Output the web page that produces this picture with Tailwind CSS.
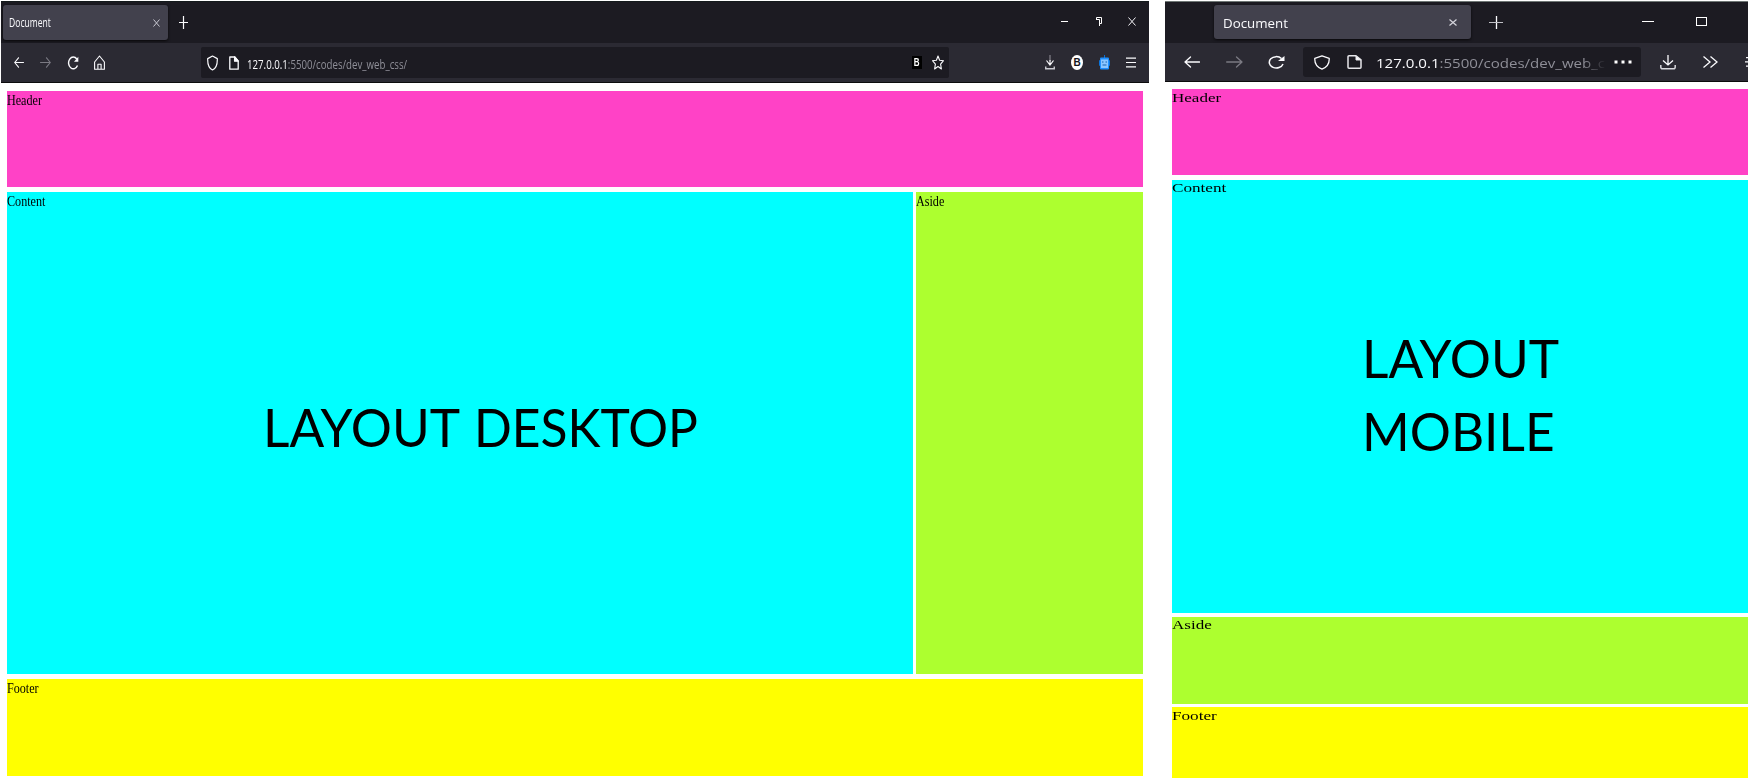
<!DOCTYPE html>
<html lang="en">
<head>
<meta charset="utf-8">
<title>Layout desktop / mobile</title>
<script src="https://cdn.jsdelivr.net/npm/@tailwindcss/browser@4"></script>
</head>
<body class="bg-white w-[1748px] h-[778px] overflow-hidden flex pt-px pl-px gap-4 text-black font-['Liberation_Serif',serif]">

<!-- Desktop window -->
<section class="w-[1148px] shrink-0 flex flex-col">
  <div class="h-[42px] bg-[#1c1b22] flex items-start text-[#fbfbfe] border-t border-[#141a1c]">
    <div class="ml-[2px] mt-[3px] w-[165px] h-[35px] rounded-[3px] bg-[#42414d] flex items-center shadow-sm shadow-black/60">
      <div class="ml-[6px] mt-px w-[144px] text-[12px] leading-[18px] whitespace-nowrap font-['Open_Sans',sans-serif]"><span class="inline-block origin-left scale-x-[.715]">Document</span></div>
      <svg class="w-[7px] h-[8px] shrink-0" viewBox="0 0 7 8" fill="none" stroke="#c8c8d0" stroke-width="1"><path d="M.5 .5l6 7M6.5 .5l-6 7"/></svg>
    </div>
    <svg class="ml-[11px] mt-[14px] w-[9px] h-[13px]" viewBox="0 0 9 13" fill="none" stroke="#fbfbfe" stroke-width="1.2"><path d="M4.5 0v13M0 6.500h9"/></svg>
    <svg class="ml-auto mt-[19px] w-[7px] h-px" viewBox="0 0 7 1"><path fill="#fff" d="M0 0h7v1H0z"/></svg>
    <svg class="ml-[28px] mt-[15px] w-[6px] h-[9px]" viewBox="0 0 6 9" fill="none" stroke="#fff" stroke-width="1"><path d="M.5 3V.500h5v6H3.500M0 2.500h3.500V9"/></svg>
    <svg class="ml-[26px] mr-[13px] mt-[15px] w-[8px] h-[9px]" viewBox="0 0 8 9" fill="none" stroke="#f0f0f4" stroke-width="1"><path d="M.5 .5l7 8M7.500 .5l-7 8"/></svg>
  </div>
  <div class="h-[40px] bg-[#2b2a33] border-b border-[#0c0c0d] flex items-center text-[#fbfbfe]">
    <svg class="ml-[13px] w-[10px] h-[11px]" viewBox="0 0 10 11" fill="none" stroke="#fbfbfe" stroke-width="1.100" stroke-linecap="round" stroke-linejoin="round"><path d="M9.500 5.500H.7M4.500 .8L.7 5.500l3.800 4.700"/></svg>
    <svg class="ml-[16px] w-[11px] h-[11px]" viewBox="0 0 11 11" fill="none" stroke="#7b7a83" stroke-width="1.100" stroke-linecap="round" stroke-linejoin="round"><path d="M.5 5.500h9.800M6.500 .8l3.800 4.700-3.800 4.700"/></svg>
    <svg class="ml-[16px] w-[12px] h-[14px]" viewBox="0 0 12 14" fill="none" stroke="#fbfbfe" stroke-width="1.400"><path d="M9.800 3A4.700 5.900 0 1 0 10.500 9.500"/><path fill="#fbfbfe" stroke="none" d="M11.300 .8v5H7z"/></svg>
    <svg class="ml-[15px] w-[11px] h-[15px]" viewBox="0 0 11 15" fill="none" stroke="#fbfbfe" stroke-width="1.100" stroke-linejoin="round"><path d="M.6 7L5.500 1l4.900 6v7.200H.6zM3.900 14V9.200h3.200V14"/></svg>
    <div class="ml-[96px] w-[748px] h-[31px] rounded-[2px] bg-[#1c1b22] flex items-center">
      <svg class="ml-[6px] w-[11px] h-[16px]" viewBox="0 0 11 16" fill="none" stroke="#fbfbfe" stroke-width="1.200" stroke-linejoin="round"><path d="M5.500 1L10.300 3.600C10.500 9 9.500 13 5.500 15 1.500 13 .5 9 .7 3.600z"/></svg>
      <svg class="ml-[11px] w-[10px] h-[14px]" viewBox="0 0 10 14" fill="none" stroke="#fbfbfe" stroke-width="1.300" stroke-linejoin="round"><path d="M.8 1h5l3.400 4v8.200H.8z"/><path fill="#fbfbfe" d="M5.600 1v4.200h3.600z"/></svg>
      <div class="ml-[8px] mt-[3px] w-[160px] whitespace-nowrap text-[13px] leading-[18px] font-['Open_Sans',sans-serif]"><span class="inline-block origin-left scale-x-[.745]">127.0.0.1<span class="text-[#8f8f98]">:5500/codes/dev_web_css/</span></span></div>
      <div class="ml-auto w-[10px] h-[13px] bg-black text-white text-[10px] leading-[13px] text-center font-bold font-['Liberation_Sans',sans-serif]"><span class="inline-block scale-x-[.8]">B</span></div>
      <svg class="ml-[10px] mr-[5px] w-[12px] h-[15px]" viewBox="0 0 12 15" fill="none" stroke="#fbfbfe" stroke-width="1.100" stroke-linejoin="round"><path d="M6 1l1.600 4.200 3.900.5-2.900 3.500.8 4.800L6 11.500 2.600 14l.8-4.800L.5 5.700l3.900-.5z"/></svg>
    </div>
    <svg class="ml-[96px] w-[10px] h-[15px]" viewBox="0 0 10 15" fill="none" stroke="#fbfbfe" stroke-width="1.200"><path stroke="#85848d" d="M5 0v6"/><path d="M5 5v5M1.500 5.500L5 10l3.500-4.500"/><path stroke="#c8c8cf" stroke-width="1.500" d="M.7 11.500v2.300h8.600v-2.300"/></svg>
    <div class="ml-[16px] w-[12px] h-[15px] rounded-[50%] bg-white text-[#15141a] text-[10px] leading-[15px] text-center font-bold font-['Liberation_Sans',sans-serif]">B</div>
    <svg class="ml-[16px] w-[11px] h-[15px]" viewBox="0 0 11 15"><path stroke="#0a6fd0" stroke-width="1" d="M5.500 0v3"/><rect x="0" y="5" width="11" height="6" rx="1" fill="#0a74dc"/><rect x="1" y="2.500" width="9" height="12" rx="1" fill="#1e90ff"/><rect x="2" y="4.500" width="7" height="8.500" fill="#8cc6ff"/><path stroke="#1560b0" d="M3 7h1.500M6.500 7H8M3.500 10h4"/></svg>
    <svg class="ml-[16px] w-[10px] h-[11px]" viewBox="0 0 10 11"><path fill="#fbfbfe" d="M0 .5h10v1.200H0zM0 4.900h10v1.200H0zM0 9.300h10v1.200H0z"/></svg>
  </div>
  <main class="mt-[8px] ml-[6px] w-[1136px] flex flex-col gap-[5px] text-[14px] leading-[20px]">
    <header class="h-[96px] bg-[#ff42c6]"><span class="inline-block origin-left scale-x-[.865]">Header</span></header>
    <div class="flex gap-[3px] h-[482px]">
      <article class="w-[906px] bg-[#00ffff] flex flex-col">
        <div><span class="inline-block origin-left scale-x-[.865]">Content</span></div>
        <h1 class="ml-[256px] mt-[178px] w-[500px] whitespace-nowrap text-[53px] leading-[73px] font-['Lato',sans-serif]"><span class="inline-block origin-left scale-x-[.97]">LAYOUT</span> <span class="inline-block -ml-[6px] origin-left scale-x-[.938]">DESKTOP</span></h1>
      </article>
      <aside class="w-[227px] bg-[#adff2f]"><span class="inline-block origin-left scale-x-[.865]">Aside</span></aside>
    </div>
    <footer class="h-[97px] bg-[#ffff00]"><span class="inline-block origin-left scale-x-[.865]">Footer</span></footer>
  </main>
</section>

<!-- Mobile window, running past the right edge -->
<section class="w-[583px] shrink-0 flex flex-col overflow-hidden">
  <div class="h-[42px] bg-[#1c1b22] flex items-start text-[#fbfbfe] border-t border-[#6f7775]">
    <div class="ml-[49px] mt-[3px] w-[257px] h-[34px] rounded-[3px] bg-[#42414d] flex items-center shadow-sm shadow-black/60">
      <div class="ml-[9px] mt-[3px] w-[226px] text-[12px] leading-[18px] whitespace-nowrap font-['Open_Sans',sans-serif]"><span class="inline-block origin-left scale-x-[1.11]">Document</span></div>
      <svg class="w-[8px] h-[7px] shrink-0" viewBox="0 0 8 7" fill="none" stroke="#d5d5dc" stroke-width="1.200"><path d="M.5 .5l7 6M7.500 .5l-7 6"/></svg>
    </div>
    <svg class="ml-[18px] mt-[14px] w-[14px] h-[13px]" viewBox="0 0 14 13" fill="none" stroke="#fbfbfe"><path stroke-width="1.300" d="M7.500 0v13"/><path stroke="#c0c0c6" stroke-width="1" d="M0 6.500h14"/></svg>
    <svg class="ml-[139px] mt-[19px] w-[12px] h-px" viewBox="0 0 12 1"><path fill="#fff" d="M0 0h12v1H0z"/></svg>
    <div class="ml-[42px] mt-[15px] w-[11px] h-[9px] border border-white"></div>
  </div>
  <div class="h-[39px] bg-[#2b2a33] border-b border-[#0c0c0d] flex items-center text-[#fbfbfe] overflow-hidden">
    <svg class="ml-[19px] shrink-0 w-[16px] h-[12px]" viewBox="0 0 16 12" fill="none" stroke="#fbfbfe" stroke-width="1.300" stroke-linecap="round" stroke-linejoin="round"><path d="M15.500 6H1M6.500 1L1 6l5.500 5"/></svg>
    <svg class="ml-[26px] shrink-0 w-[17px] h-[12px]" viewBox="0 0 17 12" fill="none" stroke="#7b7a83" stroke-width="1.300" stroke-linecap="round" stroke-linejoin="round"><path d="M.7 6H16M10.500 1L16 6l-5.500 5"/></svg>
    <svg class="ml-[25px] shrink-0 w-[17px] h-[14px]" viewBox="0 0 17 14" fill="none" stroke="#fbfbfe" stroke-width="1.500"><path d="M13.500 3.500A7 5.700 0 1 0 15 9"/><path fill="#fbfbfe" stroke="none" d="M16.500 1v5H10z"/></svg>
    <div class="ml-[18px] shrink-0 w-[338px] h-[30px] rounded-[3px] bg-[#1c1b22] flex items-center">
      <svg class="ml-[11px] shrink-0 w-[16px] h-[15px]" viewBox="0 0 16 15" fill="none" stroke="#fbfbfe" stroke-width="1.300" stroke-linejoin="round"><path d="M8 .8l7.200 2.600C15.500 8.500 13.500 12 8 14.200 2.500 12 .5 8.500 .8 3.400z"/></svg>
      <svg class="ml-[17px] shrink-0 w-[15px] h-[14px]" viewBox="0 0 15 14" fill="none" stroke="#e6e6ea" stroke-width="1.500" stroke-linejoin="round"><path d="M2 .8h7l5 4v7.400a1 1 0 0 1-1 1H2a1 1 0 0 1-1-1V1.800a1 1 0 0 1 1-1z"/><path fill="#fbfbfe" stroke-width="1" d="M9 1v4h5z"/></svg>
      <div class="ml-[14px] mt-[4px] shrink-0 w-[230px] whitespace-nowrap text-[12px] leading-[18px] font-['Open_Sans',sans-serif] mask-r-from-90% mask-r-to-100%"><span class="inline-block origin-left scale-x-[1.255]">127.0.0.1<span class="text-[#8f8f98]">:5500/codes/dev_web_c</span></span></div>
      <svg class="ml-[8px] shrink-0 w-[18px] h-[4px]" viewBox="0 0 18 4"><path fill="#fff" d="M.5 .5h3v3h-3zM7.500 .5h3v3h-3zM14.500 .5h3v3h-3z"/></svg>
    </div>
    <svg class="ml-[19px] shrink-0 w-[16px] h-[15px]" viewBox="0 0 16 15" fill="none" stroke="#fbfbfe" stroke-width="1.300"><path d="M8 0v10M3 5.500L8 10l5-4.500"/><path stroke="#d8d8dd" stroke-width="1.500" d="M.8 10v2.300a1.500 1.500 0 0 0 1.500 1.500h11.400a1.500 1.500 0 0 0 1.500-1.500V10"/></svg>
    <svg class="ml-[27px] shrink-0 w-[15px] h-[12px]" viewBox="0 0 15 12" fill="none" stroke="#fbfbfe" stroke-width="1.300"><path d="M.5 .6L7 6 .5 11.400M7.500 .6L14 6l-6.500 5.400"/></svg>
    <svg class="ml-[27px] shrink-0 w-[16px] h-[10px]" viewBox="0 0 16 10"><path fill="#fbfbfe" d="M1 0h15v1.300H1zM0 4.300h16v1.300H0zM1 8.500h15v1.300H1z"/></svg>
  </div>
  <main class="mt-[7px] ml-[7px] flex flex-col text-[13px] leading-[17px]">
    <header class="h-[86px] bg-[#ff42c6]"><span class="inline-block origin-left scale-x-[1.31]">Header</span></header>
    <article class="mt-[5px] h-[433px] bg-[#00ffff] flex flex-col">
      <div class="leading-[15px]"><span class="inline-block origin-left scale-x-[1.32]">Content</span></div>
      <h1 class="ml-[190px] mt-[126px] w-[210px] text-[53px] leading-[73px] font-['Lato',sans-serif]"><span class="inline-block origin-left scale-x-[.97]">LAYOUT<br>MOBILE</span></h1>
    </article>
    <aside class="mt-[4px] h-[87px] bg-[#adff2f] leading-[15px]"><span class="inline-block origin-left scale-x-[1.31]">Aside</span></aside>
    <footer class="mt-[3px] h-[71px] bg-[#ffff00]"><span class="inline-block origin-left scale-x-[1.32]">Footer</span></footer>
  </main>
</section>
</body>
</html>
